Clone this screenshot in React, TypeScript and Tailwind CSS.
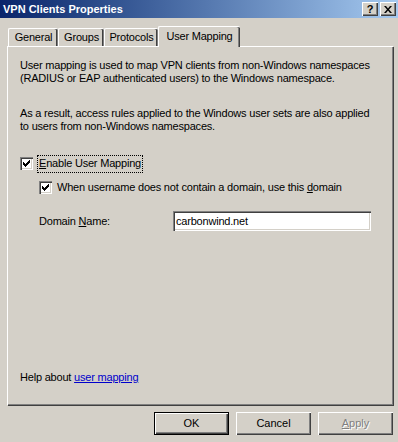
import React from "react";

const raised =
  "shadow-[inset_1px_1px_0_#ffffff,inset_-1px_-1px_0_#404040,inset_-2px_-2px_0_#808080]";
const sunken =
  "shadow-[inset_1px_1px_0_#808080,inset_2px_2px_0_#404040,inset_-1px_-1px_0_#ffffff,inset_-2px_-2px_0_#d4d0c8]";

const Check = () => (
  <span className={`w-[13px] h-[13px] bg-white flex items-center justify-center shrink-0 ${sunken}`}>
    <svg width="7" height="7" viewBox="0 0 7 7">
      <path d="M0 2h1v1h1v1h1v-1h1v-1h1v-1h1v-1h1v3h-1v1h-1v1h-1v1h-1v1h-1v-1h-1v-1h-1z" fill="#000" />
    </svg>
  </span>
);

const tabs = [
  { label: "General", w: "w-[50px]" },
  { label: "Groups", w: "w-[46px]" },
  { label: "Protocols", w: "w-[54px]" },
];

export default function App() {
  return (
    <div className="w-[398px] h-[442px] bg-[#d4d0c8] text-black text-[11px] leading-[13px] font-['Tahoma','Liberation_Sans',sans-serif] overflow-hidden">
      {/* Title bar */}
      <div className="h-[18px] flex items-center pl-[3px] pr-[2px] bg-gradient-to-r from-[#0a246a] to-[#a6caf0]">
        <span className="text-white font-bold flex-1">VPN Clients Properties</span>
        <button className={`w-[16px] h-[14px] bg-[#d4d0c8] font-bold text-[11px] leading-[12px] ${raised}`}>?</button>
        <button className={`ml-[2px] w-[16px] h-[14px] bg-[#d4d0c8] flex items-center justify-center ${raised}`}>
          <svg width="8" height="7" viewBox="0 0 8 7">
            <path d="M0 0h2l2 2.5 2-2.5h2l-3 3.5 3 3.5h-2l-2-2.5-2 2.5h-2l3-3.5z" fill="#000" />
          </svg>
        </button>
      </div>

      {/* Tabs */}
      <div className="flex items-end h-[28px] pl-[8px] tracking-[-0.2px]">
        {tabs.map((t) => (
          <div
            key={t.label}
            className={`${t.w} h-[18px] border-l border-t border-white rounded-tl-[2px] rounded-tr-[2px] flex items-center justify-center shadow-[inset_-1px_0_0_#808080,inset_-2px_0_0_#404040]`}
          >
            {t.label}
          </div>
        ))}
        <div className="relative z-10 w-[82px] h-[21px] -mb-[1px] bg-[#d4d0c8] border-l border-t border-white rounded-tl-[2px] rounded-tr-[2px] flex items-center justify-center pb-[2px] shadow-[inset_-1px_0_0_#404040,inset_-2px_0_0_#808080]">
          User Mapping
        </div>
      </div>

      {/* Panel */}
      <div className="ml-[7px] w-[386px] h-[359px] border-l border-t border-white shadow-[inset_-1px_-1px_0_#808080,1px_1px_0_#404040] pl-[12px] pt-[12px] tracking-[-0.2px]">
        <p>
          User mapping is used to map VPN clients from non-Windows namespaces
          <br />
          (RADIUS or EAP authenticated users) to the Windows namespace.
        </p>
        <p className="mt-[22px]">
          As a result, access rules applied to the Windows user sets are also applied
          <br />
          to users from non-Windows namespaces.
        </p>

        <div className="mt-[22px] flex items-center h-[17px]">
          <Check />
          <span className="ml-[4px] px-[1px] border border-dotted border-black h-[18px] flex items-center">
            <span><u>E</u>nable User Mapping</span>
          </span>
        </div>

        <div className="mt-[9px] ml-[19px] flex items-center">
          <Check />
          <span className="ml-[5px]">
            When username does not contain a domain, use this <u>d</u>omain
          </span>
        </div>

        <div className="mt-[17px] ml-[19px] flex items-center">
          <span className="w-[134px]">
            Domain <u>N</u>ame:
          </span>
          <div className={`w-[198px] h-[20px] bg-white flex items-center pl-[3px] ${sunken}`}>
            carbonwind.net
          </div>
        </div>

        <p className="mt-[140px]">
          Help about{" "}
          <a className="text-[#0000cc] underline" href="#">
            user mapping
          </a>
        </p>
      </div>

      {/* Buttons */}
      <div className="mt-[7px] flex justify-end gap-[6px] pr-[5px]">
        <button className="w-[75px] h-[23px] border border-black bg-[#d4d0c8] shadow-[inset_1px_1px_0_#ffffff,inset_-1px_-1px_0_#404040,inset_-2px_-2px_0_#808080]">
          OK
        </button>
        <button className={`ml-[1px] w-[75px] h-[23px] bg-[#d4d0c8] ${raised}`}>Cancel</button>
        <button
          className={`ml-[1px] w-[75px] h-[23px] bg-[#d4d0c8] text-[#808080] [text-shadow:1px_1px_0_#ffffff] ${raised}`}
        >
          <u>A</u>pply
        </button>
      </div>
    </div>
  );
}
